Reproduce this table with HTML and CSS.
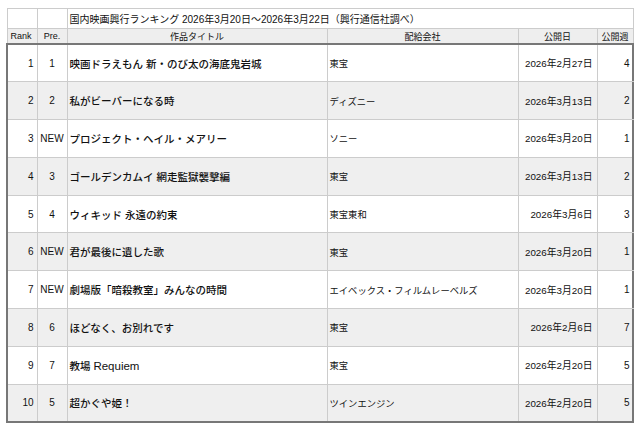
FILE: index.html
```html
<!DOCTYPE html>
<html lang="ja">
<head>
<meta charset="utf-8">
<link rel="stylesheet" href="styles.css">
</head>
<body>
<table class="rank-table">
  <colgroup>
    <col class="c-rank"><col class="c-pre"><col class="c-title"><col class="c-dist"><col class="c-date"><col class="c-week">
  </colgroup>
  <thead>
    <tr class="caption-row">
      <th></th><th></th>
      <th colspan="4" class="caption">国内映画興行ランキング 2026年3月20日〜2026年3月22日（興行通信社調べ）</th>
      <th></th>
    </tr>
    <tr class="head-row">
      <th>Rank</th><th>Pre.</th><th>作品タイトル</th><th>配給会社</th><th>公開日</th><th>公開週</th>
    </tr>
  </thead>
  <tbody>
    <tr><td class="rank">1</td><td class="pre">1</td><td class="title">映画ドラえもん 新・のび太の海底鬼岩城</td><td class="dist">東宝</td><td class="date">2026年2月27日</td><td class="week">4</td></tr>
    <tr class="alt"><td class="rank">2</td><td class="pre">2</td><td class="title">私がビーバーになる時</td><td class="dist">ディズニー</td><td class="date">2026年3月13日</td><td class="week">2</td></tr>
    <tr><td class="rank">3</td><td class="pre">NEW</td><td class="title">プロジェクト・ヘイル・メアリー</td><td class="dist">ソニー</td><td class="date">2026年3月20日</td><td class="week">1</td></tr>
    <tr class="alt"><td class="rank">4</td><td class="pre">3</td><td class="title">ゴールデンカムイ 網走監獄襲撃編</td><td class="dist">東宝</td><td class="date">2026年3月13日</td><td class="week">2</td></tr>
    <tr><td class="rank">5</td><td class="pre">4</td><td class="title">ウィキッド 永遠の約束</td><td class="dist">東宝東和</td><td class="date">2026年3月6日</td><td class="week">3</td></tr>
    <tr class="alt"><td class="rank">6</td><td class="pre">NEW</td><td class="title">君が最後に遺した歌</td><td class="dist">東宝</td><td class="date">2026年3月20日</td><td class="week">1</td></tr>
    <tr><td class="rank">7</td><td class="pre">NEW</td><td class="title">劇場版「暗殺教室」みんなの時間</td><td class="dist">エイベックス・フィルムレーベルズ</td><td class="date">2026年3月20日</td><td class="week">1</td></tr>
    <tr class="alt"><td class="rank">8</td><td class="pre">6</td><td class="title">ほどなく、お別れです</td><td class="dist">東宝</td><td class="date">2026年2月6日</td><td class="week">7</td></tr>
    <tr><td class="rank">9</td><td class="pre">7</td><td class="title">教場 <span class="latin">Requiem</span></td><td class="dist">東宝</td><td class="date">2026年2月20日</td><td class="week">5</td></tr>
    <tr class="alt"><td class="rank">10</td><td class="pre">5</td><td class="title">超かぐや姫！</td><td class="dist">ツインエンジン</td><td class="date">2026年2月20日</td><td class="week">5</td></tr>
  </tbody>
</table>
</body>
</html>
```

FILE: styles.css
```css
html, body {
  background: #ffffff;
}
body {
  margin: 8px 6px;
  font-family: "Liberation Sans", "Noto Sans CJK JP", sans-serif;
  color: #111111;
}
.rank-table {
  border-collapse: collapse;
  table-layout: fixed;
  width: 626px;
}
.c-rank { width: 30px; }
.c-pre { width: 30px; }
.c-title { width: 260px; }
.c-dist { width: 191px; }
.c-date { width: 79px; }
.c-week { width: 36px; }

th, td {
  border: 1px solid #cccccc;
  padding: 0 3px;
  white-space: nowrap;
  overflow: hidden;
}
.caption-row th {
  height: 19px;
  background: #ffffff;
}
.caption {
  text-align: left;
  font-weight: normal;
  font-size: 10px;
  padding-left: 2px;
}
.head-row th {
  height: 14px;
  background: #eeeeee;
  font-weight: normal;
  font-size: 9px;
  text-align: center;
}
.head-row th:first-child {
  text-align: left;
}
tbody {
  border: 2px solid #777777;
}
tbody tr {
  height: 37.8px;
  background: #ffffff;
}
tbody tr.alt {
  background: #efefef;
}
tbody td {
  font-size: 10px;
}
.rank {
  text-align: right;
}
.pre {
  text-align: center;
  padding: 0;
}
.title {
  font-size: 10.5px;
  font-weight: 500;
  padding-left: 2px;
}
.latin {
  font-size: 11.5px;
  font-weight: normal;
}
.dist {
  font-size: 9.3px;
  padding-left: 2px;
}
.date {
  font-size: 9.8px;
  text-align: right;
  padding-right: 4px;
}
.week {
  text-align: right;
  padding-right: 3px;
}
```
